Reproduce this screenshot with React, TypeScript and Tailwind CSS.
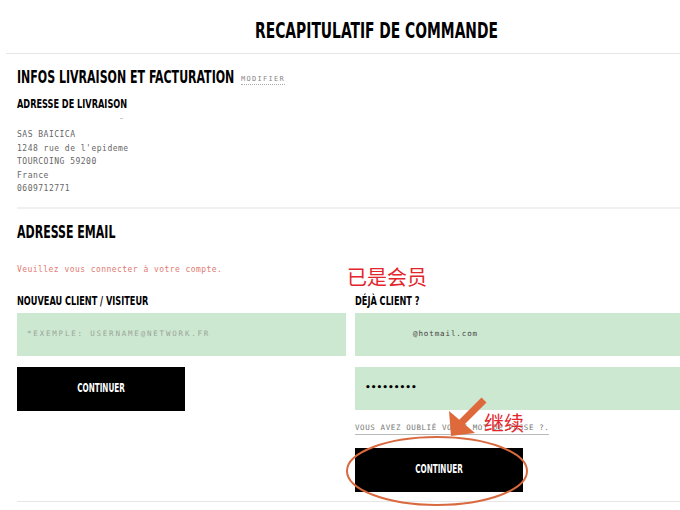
import React from "react"

const cond = "font-['DejaVu_Sans_Condensed','DejaVu_Sans',sans-serif] font-bold [font-stretch:condensed] whitespace-nowrap"
const squeeze = "inline-block origin-left scale-x-[0.72]"
const mono = "font-['DejaVu_Sans_Mono','Liberation_Mono',monospace]"

function Annotations() {
  return (
    <>
      <span className="absolute left-[347px] top-[265px] text-[20px] leading-[24px] text-[#e3262c] font-['Noto_Sans_CJK_SC',sans-serif]">
        已是会员
      </span>
      <span className="absolute left-[484px] top-[411px] text-[20px] leading-[24px] text-[#e3262c] font-['Noto_Sans_CJK_SC',sans-serif]">
        继续
      </span>
      <svg className="absolute left-0 top-0 pointer-events-none" width="680" height="510" viewBox="0 0 680 510">
        <line x1="484" y1="400" x2="461" y2="423" stroke="#de6a3c" strokeWidth="7" />
        <polygon points="451,436 449,411 475,433" fill="#de6a3c" />
        <ellipse cx="437" cy="471" rx="90" ry="34" fill="none" stroke="#d9693f" strokeWidth="2" />
      </svg>
    </>
  )
}

function Button({ label }: { label: string }) {
  return (
    <button className={`${cond} w-[168px] h-[44px] bg-black text-white text-[11.5px] flex items-center justify-center`}>
      <span className="inline-block scale-x-[0.7]">{label}</span>
    </button>
  )
}

export default function App() {
  return (
    <div className="relative w-[680px] h-[510px] overflow-hidden bg-white text-black">
      <div className="pl-[6px]">
        <div className="h-[54px] pt-[8px] pl-[66px] flex items-center justify-center border-b border-[#e6e6e6]">
          <h1 className={`${cond} inline-block scale-x-[0.7] text-[22px] leading-none`}>RECAPITULATIF DE COMMANDE</h1>
        </div>
      </div>

      <div className="pl-[17px]">
        <section className="pb-[11px] border-b-2 border-[#f0f0f0]">
          <h2 className="mt-[13px] h-[20px] flex items-center">
            <span className="w-[224px] shrink-0 leading-[20px]">
              <span className={`${cond} ${squeeze} text-[17px]`}>INFOS LIVRAISON ET FACTURATION</span>
            </span>
            <span className={`${mono} mt-[4px] text-[7px] leading-[10px] tracking-[1.3px] text-[#888] border-b border-dotted border-[#aaa]`}>MODIFIER</span>
          </h2>
          <h3 className={`${cond} mt-[9px] text-[13px] leading-[16px]`}>
            <span className="inline-block origin-left scale-x-[0.7]">ADRESSE DE LIVRAISON</span>
          </h3>
          <div className="ml-[103px] mt-[6px] w-[3px] h-[1px] bg-[#ccc]" />
          <div className={`${mono} mt-[9px] text-[8px] tracking-[0.5px] leading-[13.5px] text-[#666]`}>
            <div>SAS BAICICA</div>
            <div>1248 rue de l'epideme</div>
            <div>TOURCOING 59200</div>
            <div>France</div>
            <div>0609712771</div>
          </div>
        </section>

        <section className="pb-[9px] border-b border-[#e6e6e6]">
          <h2 className={`${cond} mt-[13px] text-[17px] leading-[20px]`}>
            <span className={squeeze}>ADRESSE EMAIL</span>
          </h2>
          <p className={`${mono} mt-[22px] text-[8px] tracking-[0.45px] leading-[12px] text-[#e07b72]`}>
            Veuillez vous connecter à votre compte.
          </p>

          <div className="flex gap-[9px]">
            <div className="w-[329px]">
              <h3 className={`${cond} mt-[17px] text-[13px] leading-[16px]`}>
                <span className="inline-block origin-left scale-x-[0.7]">NOUVEAU CLIENT / VISITEUR</span>
              </h3>
              <div className={`${mono} mt-[4px] h-[43px] bg-[#cde8d0] flex items-center pl-[10px] text-[7.5px] tracking-[1.8px] text-[#9aa59b]`}>
                *EXEMPLE: USERNAME@NETWORK.FR
              </div>
              <div className="mt-[11px]">
                <Button label="CONTINUER" />
              </div>
            </div>

            <div className="flex-1">
              <h3 className={`${cond} mt-[17px] text-[13px] leading-[16px]`}>
                <span className="inline-block origin-left scale-x-[0.7]">DÉJÀ CLIENT ?</span>
              </h3>
              <div className={`${mono} mt-[4px] h-[43px] bg-[#cde8d0] flex items-center pl-[58px] text-[7.5px] tracking-[0.9px] text-[#444]`}>
                @hotmail.com
              </div>
              <div className="mt-[11px] h-[43px] bg-[#cde8d0] flex items-center pl-[10px] text-[9px] font-bold font-['DejaVu_Sans',sans-serif]">
                •••••••••
              </div>
              <div className="mt-[12px] flex">
                <span className={`${mono} whitespace-nowrap leading-[12px] text-[7.5px] tracking-[0.6px] text-[#777] border-b border-[#bbb]`}>
                  VOUS AVEZ OUBLIÉ VOTRE MOT DE PASSE ?.
                </span>
              </div>
              <div className="mt-[13px]">
                <Button label="CONTINUER" />
              </div>
            </div>
          </div>
        </section>
      </div>

      <Annotations />
    </div>
  )
}
